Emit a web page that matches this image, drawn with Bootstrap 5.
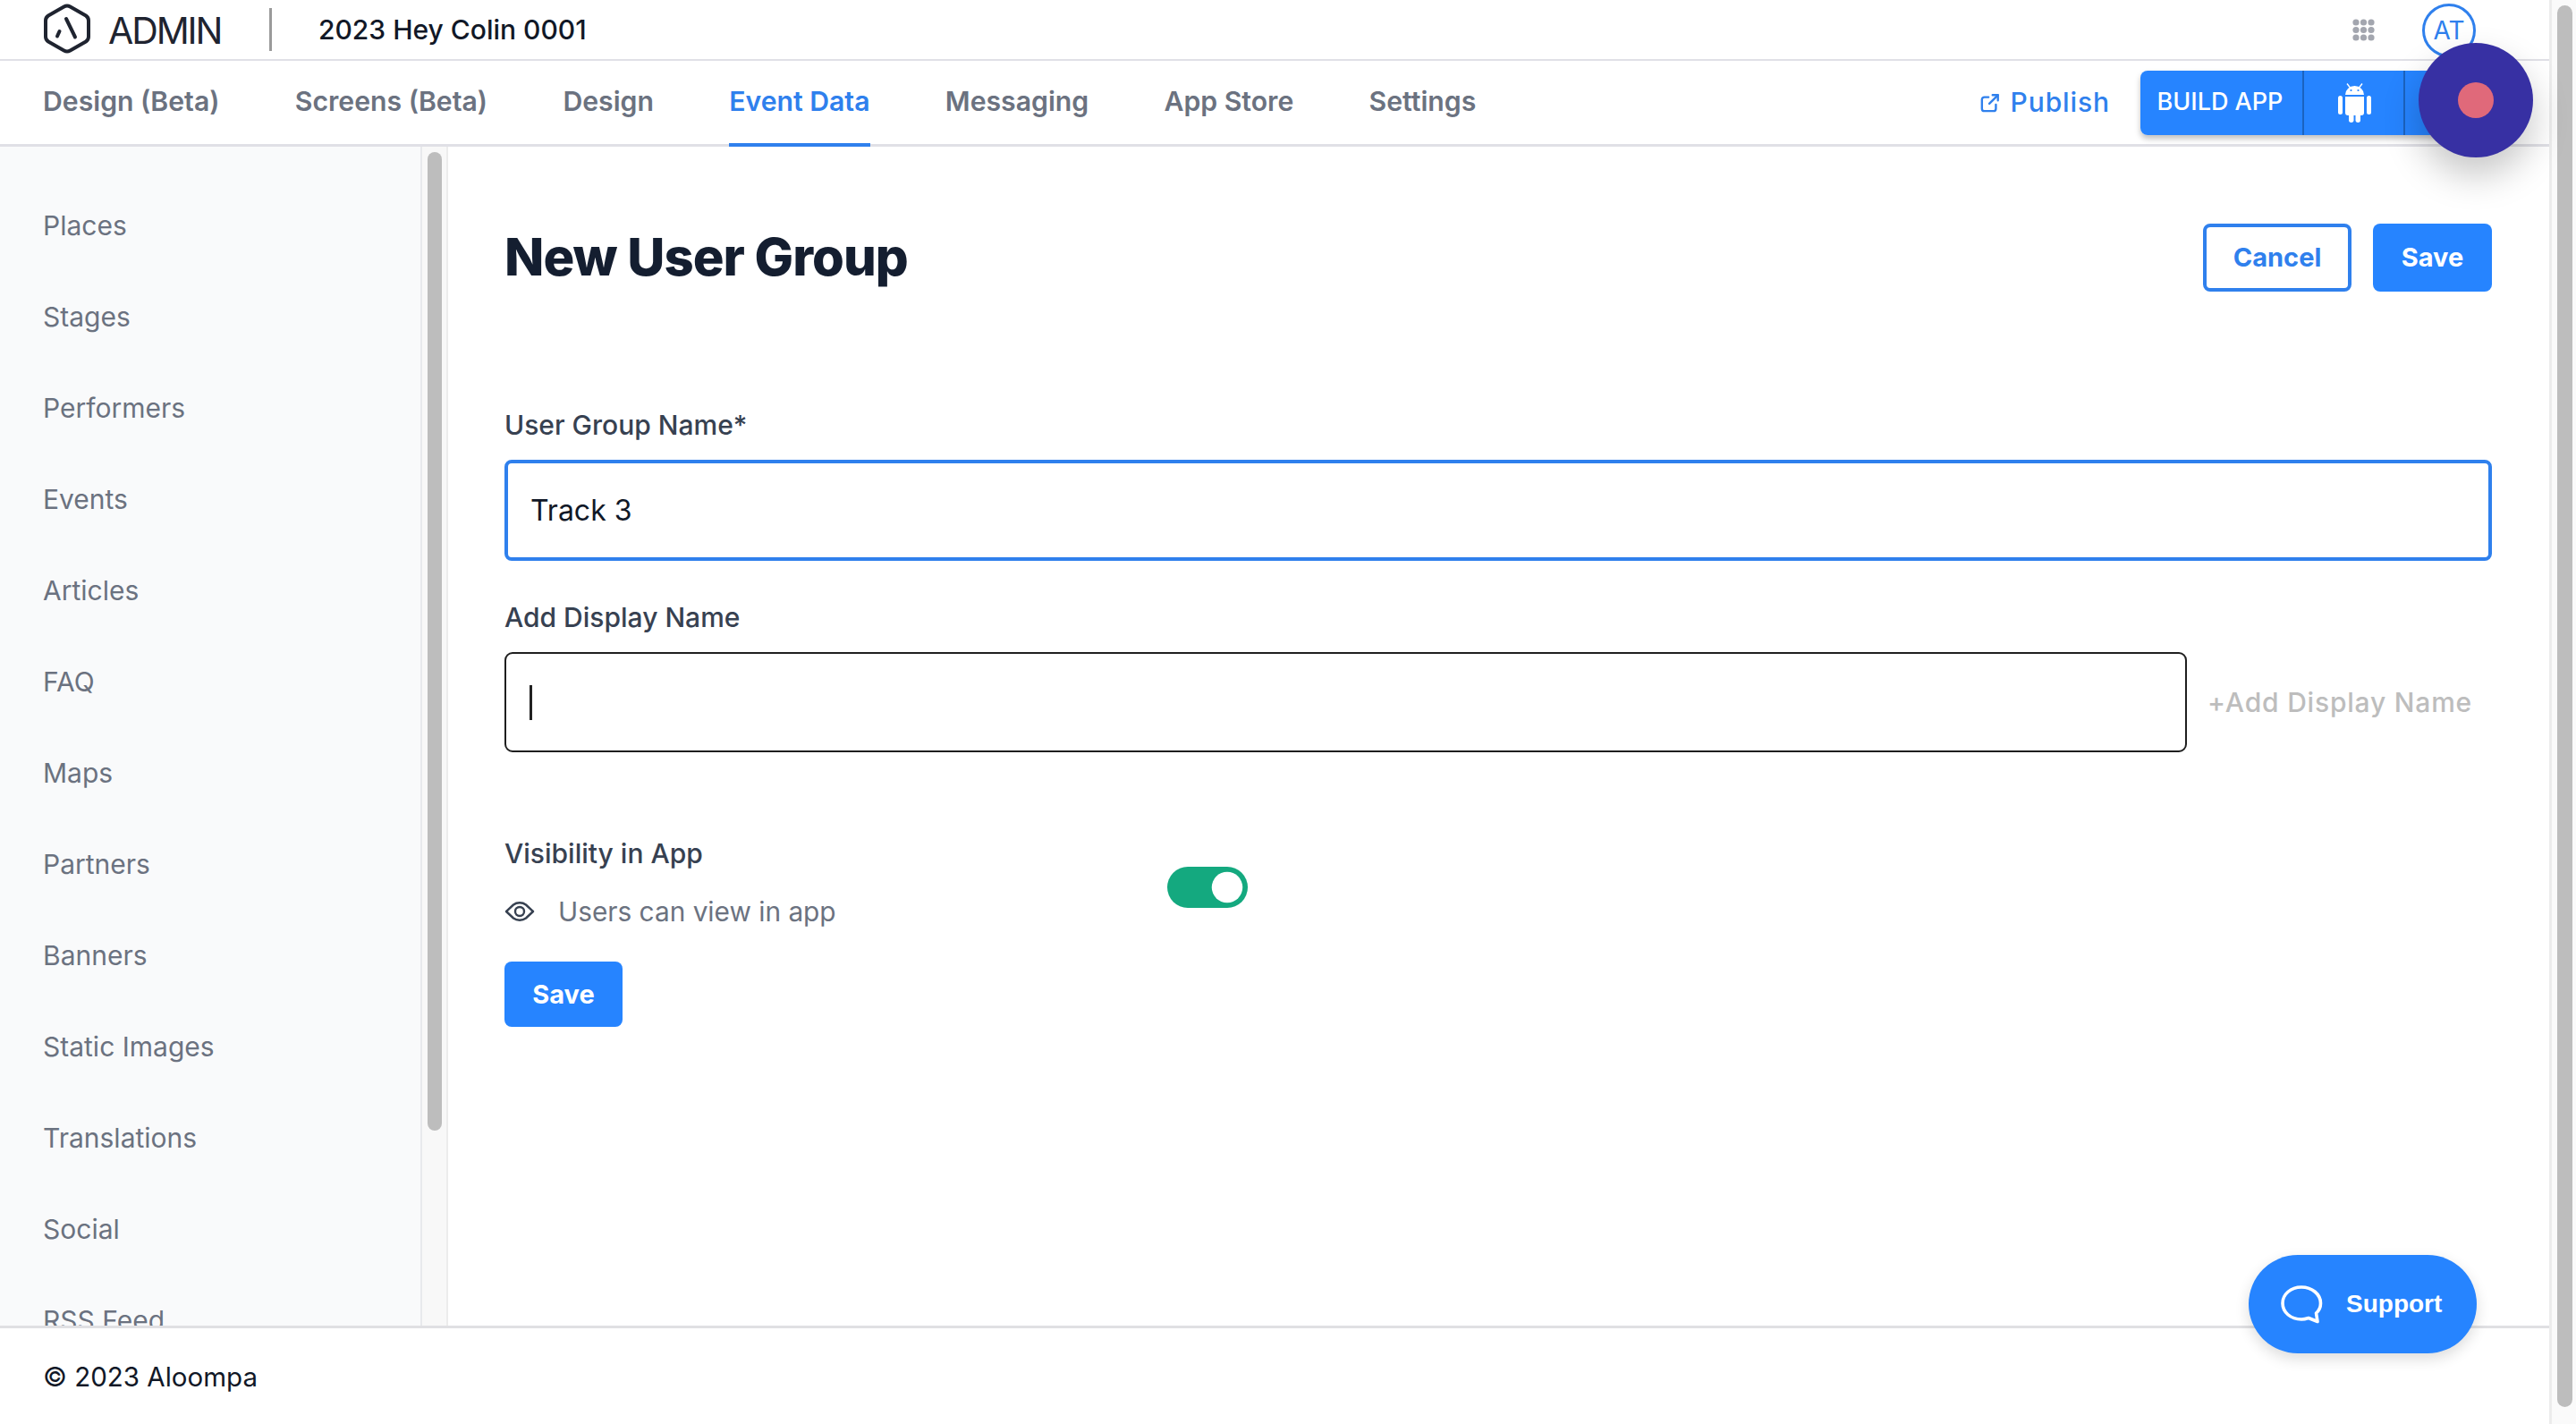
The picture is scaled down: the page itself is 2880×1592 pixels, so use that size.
<!DOCTYPE html>
<html lang="en">
<head>
  <meta charset="UTF-8">
  <title>New User Group</title>
  <meta name="viewport" content="width=device-width, initial-scale=1">
  <link href="https://cdn.jsdelivr.net/npm/bootstrap@5.3.0/dist/css/bootstrap.min.css" rel="stylesheet">
  <style>
    html, body { height: 100%; overflow: hidden; }
    body { background: #fff; font-family: Inter, "Liberation Sans", sans-serif; font-size: 30px; color: #111827; }
    .app-shell { height: 100vh; }
    .page-col { width: 2850px; min-width: 0; }
    .page-scroll { width: 30px; background: #fafafa; border-left: 3px solid #ececec; padding: 6px 4px 19px 6px; }
    .page-scroll div, .side-track div { background: #bdbdbd; border-radius: 9px; }
    .page-scroll div { height: 100%; }

    .top-bar { height: 68px; padding: 0 82px 0 48px; border-bottom: 2px solid #e0e0e6; }
    .logo-mark { width: 54px; height: 56px; margin-top: -3px; }
    .logo-word { font-size: 41px; letter-spacing: -2.1px; color: #1f2430; margin: 3px 0 0 19px; width: 127px; }
    .bar-divider { width: 3px; height: 48px; background: #9a9a9a; margin: 0 52px 0 53px; }
    .app-name { font-weight: 500; color: #111827; }
    .grid-dots { width: 25px; height: 25px; margin-right: 53px; }
    .avatar { width: 60px; height: 60px; margin-top: 2px; border: 3px solid #2f80ed; border-radius: 50%; color: #2f80ed; font-size: 28px; }

    .tab-bar { height: 96px; padding: 0 64px 0 48px; border-bottom: 3px solid #e0e0e6; }
    .tab-bar .nav { gap: 84.3px; height: 100%; }
    .tab-bar .nav-link { padding: 0 0 4px; display: flex; align-items: center; color: #6b7280; font-size: 30.2px; font-weight: 600; border-bottom: 4px solid transparent; border-top: 4px solid transparent; margin-bottom: -3px; height: calc(100% + 3px); }
    .tab-bar .nav-link.active { color: #2f80ed; border-bottom-color: #2f80ed; }
    .publish-link { color: #2f80ed; font-weight: 500; letter-spacing: .9px; text-decoration: none; margin-right: 34px; }
    .publish-link svg { width: 22px; height: 22px; margin-right: 12px; }
    .build-group { height: 72px; box-shadow: 0 4px 6px rgba(0, 0, 0, .25); border-radius: 8px; }
    .build-group .btn { background: #2684ff; border: 0; color: #fff; border-radius: 8px; padding: 0; font-size: 27px; font-weight: 500; }
    .build-group .btn + .btn { border-left: 2px solid #1b63bf; margin-left: 0; }
    .build-text { width: 182px; padding-right: 4px !important; }
    .build-android { width: 114px; }
    .build-ios { width: 99px; }

    .body-row { min-height: 0; }
    .side-panel { width: 472px; background: #f9fafb; border-right: 2px solid #e8e9ec; padding-top: 37px; overflow: hidden; }
    .side-panel a { display: flex; align-items: center; height: 102px; padding-left: 48px; color: #6b7280; text-decoration: none; }
    .side-track { width: 29px; background: #f8f8f8; border-right: 2px solid #ececec; padding: 6px 5px 0 6px; }
    .side-track div { height: 1094px; }

    .main-pane { padding: 86px 64px 0 63px; }
    .page-title { font-size: 58px; font-weight: 800; color: #141e30; margin: 0; letter-spacing: -1px; }
    .head-row { height: 76px; margin-bottom: 128px; }
    .btn-outline-brand, .btn-brand { font-size: 29px; font-weight: 700; border-radius: 8px; padding: 0; }
    .btn-outline-brand { width: 166px; height: 76px; border: 4px solid #2f80ed; color: #2f80ed; background: #fff; }
    .btn-brand { background: #2684ff; color: #fff; border: 0; width: 133px; height: 76px; }
    .save-small { width: 132px; height: 73px; }
    .field-label { display: block; font-weight: 500; color: #374151; line-height: 42px; margin-bottom: 18px; }
    .name-input.form-control { height: 113px; border: 4px solid #2f80ed; border-radius: 8px; padding: 0 25px; font-size: 32px; color: #111827; margin-bottom: 42px; box-shadow: none; }
    .display-input { width: 1881px; height: 112px; border: 2.5px solid #1f1f1f; border-radius: 9px; padding-left: 26px; }
    .fake-caret { width: 3px; height: 39px; background: #222; }
    .add-hint { margin-left: 23px; color: #bdbdbd; font-weight: 500; letter-spacing: .8px; }
    .visibility-row { margin-top: 92px; margin-bottom: 35px; }
    .visibility-text { width: 741px; }
    .visibility-text .field-label { margin-bottom: 23px; }
    .sub-line { color: #6b7280; line-height: 42px; font-size: 29.8px; }
    .sub-line svg { width: 34px; height: 24px; margin-right: 26px; }
    .green-switch.form-check { padding: 0; margin: 10px 0 0; min-height: 0; }
    .green-switch .form-check-input { width: 90px; height: 46px; margin: 0; float: none; border: 0; background-color: #14a97f; box-shadow: none; display: block; }

    .page-foot { height: 110px; padding: 2px 0 0 48px; border-top: 3px solid #e0e0e3; background: #fff; color: #111827; font-size: 29.5px; }

    .rec-button { position: absolute; left: 2704px; top: 48px; width: 128px; height: 128px; border-radius: 50%; background: #3730a3; box-shadow: 0 20px 40px rgba(0, 0, 0, .22); }
    .rec-button span { width: 40px; height: 40px; border-radius: 50%; background: #e0697a; }
    .support-pill { position: absolute; left: 2514px; top: 1403px; width: 255px; height: 110px; border-radius: 55px; background: #2684ff; box-shadow: 0 6px 16px rgba(0, 0, 0, .14); color: #fff; font-family: "Liberation Sans", sans-serif; font-weight: 700; font-size: 28px; }
    .support-pill svg { width: 50px; height: 44px; margin: 0 24px 0 35px; }
  </style>
</head>
<body>
  <div class="app-shell d-flex position-relative">
    <div class="page-col d-flex flex-column">

      <!-- top bar -->
      <div class="top-bar d-flex align-items-center flex-shrink-0">
        <svg class="logo-mark" viewBox="0 0 54 56" fill="none" stroke="#1f2430" stroke-width="4" stroke-linecap="round" stroke-linejoin="round">
          <path d="M23.5 3.5Q27 1.5 30.5 3.5L48 13.5Q51 15.5 51 19V37Q51 40.5 48 42.5L30.5 52.5Q27 54.5 23.5 52.5L6 42.5Q3 40.5 3 37V19Q3 15.5 6 13.5Z"/>
          <path d="M26 17L36 37.5"/>
          <path d="M18.5 31L16 36.5"/>
        </svg>
        <span class="logo-word">ADMIN</span>
        <span class="bar-divider"></span>
        <span class="app-name">2023 Hey Colin 0001</span>
        <svg class="grid-dots ms-auto" viewBox="0 0 25 25" fill="#a3a6af">
          <circle cx="4" cy="4" r="3.6"/><circle cx="12.5" cy="4" r="3.6"/><circle cx="21" cy="4" r="3.6"/>
          <circle cx="4" cy="12.5" r="3.6"/><circle cx="12.5" cy="12.5" r="3.6"/><circle cx="21" cy="12.5" r="3.6"/>
          <circle cx="4" cy="21" r="3.6"/><circle cx="12.5" cy="21" r="3.6"/><circle cx="21" cy="21" r="3.6"/>
        </svg>
        <span class="avatar d-flex align-items-center justify-content-center">AT</span>
      </div>

      <!-- tabs -->
      <div class="tab-bar d-flex align-items-center flex-shrink-0">
        <ul class="nav">
          <li class="nav-item"><a class="nav-link" href="#">Design (Beta)</a></li>
          <li class="nav-item"><a class="nav-link" href="#">Screens (Beta)</a></li>
          <li class="nav-item"><a class="nav-link" href="#">Design</a></li>
          <li class="nav-item"><a class="nav-link active" href="#">Event Data</a></li>
          <li class="nav-item"><a class="nav-link" href="#">Messaging</a></li>
          <li class="nav-item"><a class="nav-link" href="#">App Store</a></li>
          <li class="nav-item"><a class="nav-link" href="#">Settings</a></li>
        </ul>
        <a class="publish-link ms-auto d-flex align-items-center" href="#">
          <svg viewBox="0 0 24 24" fill="none" stroke="#2f80ed" stroke-width="2.6" stroke-linecap="round" stroke-linejoin="round">
            <path d="M10 5H5a3 3 0 0 0-3 3v11a3 3 0 0 0 3 3h11a3 3 0 0 0 3-3v-5"/>
            <path d="M11 13L21.5 2.5"/><path d="M15 2.5h6.5V9"/>
          </svg>
          Publish
        </a>
        <div class="btn-group build-group">
          <button class="btn build-text" type="button">BUILD APP</button>
          <button class="btn build-android" type="button">
            <svg width="37" height="44" viewBox="0 0 37 44" fill="#fff">
              <rect x="0" y="14" width="5" height="21" rx="2.5"/>
              <rect x="32" y="14" width="5" height="21" rx="2.5"/>
              <path d="M8 15h21v18a3 3 0 0 1-3 3H11a3 3 0 0 1-3-3Z"/>
              <path d="M8 13a10.5 10 0 0 1 21 0Z"/>
              <rect x="12" y="30" width="5.5" height="14" rx="2.75"/>
              <rect x="19.5" y="30" width="5.5" height="14" rx="2.75"/>
              <path d="M10 .5L13.5 5M27 .5L23.5 5" stroke="#fff" stroke-width="1.4"/>
              <circle cx="14.5" cy="8" r="1.1" fill="#2684ff"/><circle cx="22.5" cy="8" r="1.1" fill="#2684ff"/>
            </svg>
          </button>
          <button class="btn build-ios" type="button" aria-label="Build iOS"></button>
        </div>
      </div>

      <div class="body-row d-flex flex-grow-1">
        <!-- left menu -->
        <aside class="side-panel flex-shrink-0">
          <a href="#">Places</a>
          <a href="#">Stages</a>
          <a href="#">Performers</a>
          <a href="#">Events</a>
          <a href="#">Articles</a>
          <a href="#">FAQ</a>
          <a href="#">Maps</a>
          <a href="#">Partners</a>
          <a href="#">Banners</a>
          <a href="#">Static Images</a>
          <a href="#">Translations</a>
          <a href="#">Social</a>
          <a href="#">RSS Feed</a>
        </aside>
        <div class="side-track flex-shrink-0"><div></div></div>

        <!-- form -->
        <main class="main-pane flex-grow-1">
          <div class="head-row d-flex align-items-center justify-content-between">
            <h1 class="page-title">New User Group</h1>
            <div class="d-flex gap-4">
              <button class="btn btn-outline-brand" type="button">Cancel</button>
              <button class="btn btn-brand" type="button">Save</button>
            </div>
          </div>

          <label class="field-label" for="groupName">User Group Name*</label>
          <input class="form-control name-input" id="groupName" type="text" value="Track 3">

          <label class="field-label">Add Display Name</label>
          <div class="d-flex align-items-center">
            <div class="display-input d-flex align-items-center"><span class="fake-caret"></span></div>
            <span class="add-hint">+Add Display Name</span>
          </div>

          <div class="visibility-row d-flex align-items-center">
            <div class="visibility-text">
              <span class="field-label">Visibility in App</span>
              <div class="sub-line d-flex align-items-center">
                <svg viewBox="0 0 34 24" fill="none" stroke="#374151" stroke-width="2.4" stroke-linejoin="round">
                  <path d="M2 12L10 4.5C14 1.5 20 1.5 24 4.5L32 12L24 19.5C20 22.5 14 22.5 10 19.5Z"/>
                  <circle cx="17" cy="12" r="5"/>
                </svg>
                Users can view in app
              </div>
            </div>
            <div class="form-check form-switch green-switch">
              <input class="form-check-input" type="checkbox" role="switch" checked>
            </div>
          </div>

          <button class="btn btn-brand save-small" type="button">Save</button>
        </main>
      </div>

      <footer class="page-foot d-flex align-items-center flex-shrink-0">© 2023 Aloompa</footer>
    </div>

    <div class="page-scroll flex-shrink-0"><div></div></div>

    <!-- floating stuff -->
    <div class="rec-button d-flex align-items-center justify-content-center"><span></span></div>
    <div class="support-pill d-flex align-items-center">
      <svg viewBox="0 0 50 44" fill="none" stroke="#fff" stroke-width="3.6" stroke-linejoin="round">
        <path d="M24 3C12 3 3 11 3 21s9 18 21 18c3 0 5-.5 8-1.5L42 41.5 40.5 32C44 29 45.5 25 45.5 21 45.5 11 36 3 24 3Z"/>
      </svg>
      Support
    </div>
  </div>

  <script src="https://cdn.jsdelivr.net/npm/bootstrap@5.3.0/dist/js/bootstrap.bundle.min.js"></script>
</body>
</html>
